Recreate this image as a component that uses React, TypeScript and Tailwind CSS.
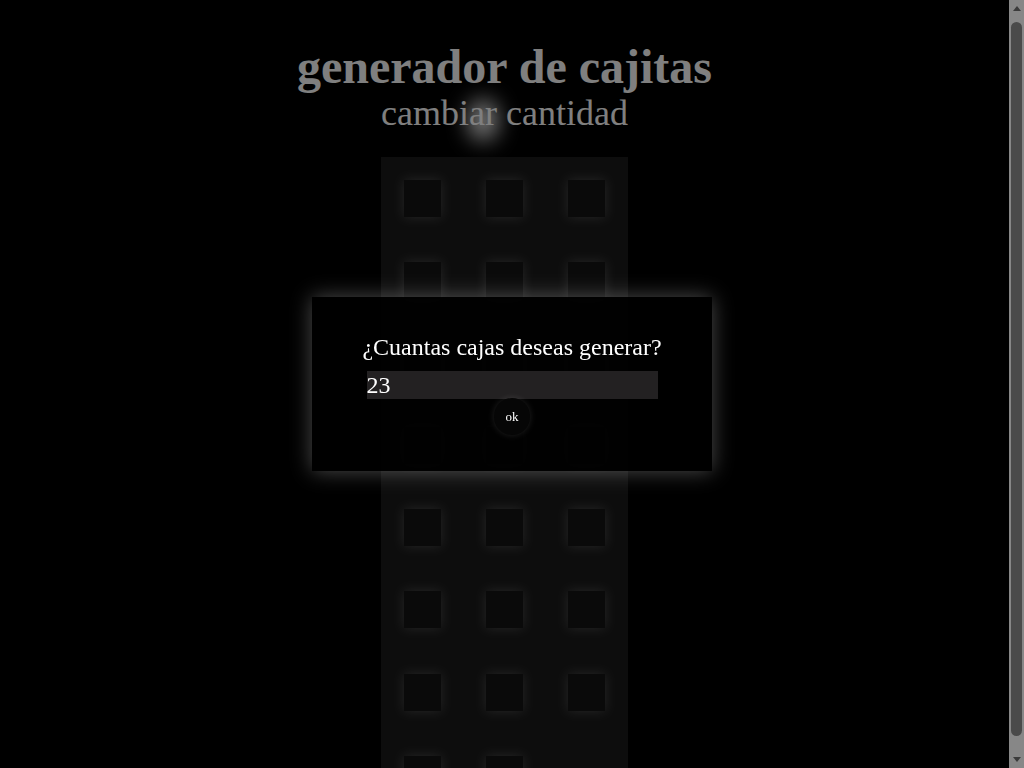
import { useState } from "react";

const Cajita = () => (
  <div className="w-1/3 aspect-square flex items-center justify-center">
    <div className="w-[37px] h-[37px] bg-[#151515] shadow-[0_0_11px_rgba(255,255,255,0.22)]" />
  </div>
);

const Scrollbar = () => (
  <div className="relative z-20 w-[15px] h-screen shrink-0 bg-[#878787] flex flex-col">
    <div className="h-[17px] flex items-center justify-center">
      <svg width="8" height="5" viewBox="0 0 8 5">
        <polygon points="4,0 8,5 0,5" fill="#3b3b3b" />
      </svg>
    </div>
    <div className="flex-1 px-[2px] pt-[5px] pb-[15px]">
      <div className="h-full rounded-full bg-[#4a4a4a]" />
    </div>
    <div className="h-[17px] flex items-center justify-center">
      <svg width="8" height="5" viewBox="0 0 8 5">
        <polygon points="0,0 8,0 4,5" fill="#3b3b3b" />
      </svg>
    </div>
  </div>
);

export default function App() {
  const [cantidad, setCantidad] = useState("23");
  const total = 23;

  return (
    <div className="flex h-screen overflow-hidden bg-black font-['Liberation_Serif',serif]">
      {/* Page */}
      <div className="flex-1 h-screen overflow-hidden">
        <div className="relative flex flex-col items-center pt-[43px] pb-[25px]">
          {/* cursor glow */}
          <div className="absolute left-[469px] top-[100px] w-[28px] h-[40px] rounded-full bg-white blur-[11px]" />

          <h1 className="relative text-[48px] leading-[48px] font-bold text-white">
            generador de cajitas
          </h1>
          <h2 className="relative mt-[4px] text-[36px] leading-[36px] text-white">
            cambiar cantidad
          </h2>

          <div className="relative mt-[26px] w-[247px] flex flex-wrap bg-[#1b1b1b]">
            {Array.from({ length: total }).map((_, i) => (
              <Cajita key={i} />
            ))}
          </div>
        </div>
      </div>

      <Scrollbar />

      {/* Overlay */}
      <div className="fixed inset-0 z-10 bg-black/50" />

      {/* Dialog */}
      <div className="fixed left-1/2 top-1/2 z-20 -translate-x-1/2 -translate-y-1/2 w-[400px] h-[174px] bg-black/90 shadow-[0_0_20px_rgba(255,255,255,0.3)] flex flex-col items-center pt-[38px]">
        <p className="text-[24px] leading-[24px] text-white">
          ¿Cuantas cajas deseas generar?
        </p>
        <input
          type="text"
          value={cantidad}
          onChange={(e) => setCantidad(e.target.value)}
          className="mt-[12px] w-[291px] h-[28px] bg-[#232122] text-white text-[24px] leading-[28px] px-0 outline-none"
        />
        <button className="mt-[-1px] w-[36px] h-[37px] rounded-full bg-[#060606] shadow-[0_0_6px_rgba(255,255,255,0.12)] text-white text-[13px]">
          ok
        </button>
      </div>
    </div>
  );
}
